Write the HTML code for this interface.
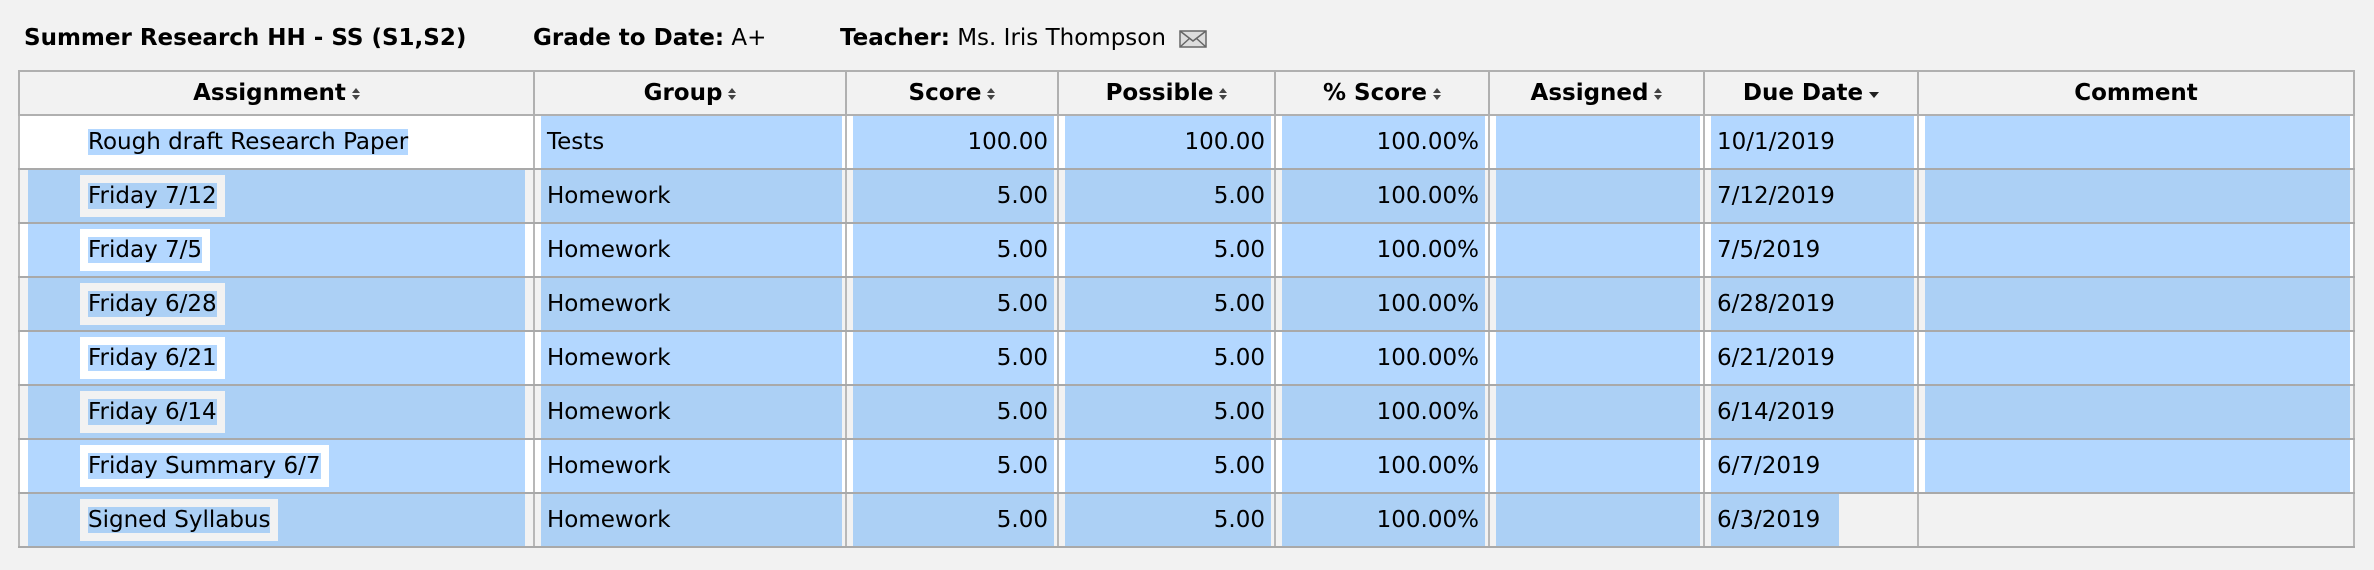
<!DOCTYPE html>
<html><head><meta charset="utf-8"><style>
body{margin:0;width:2374px;height:570px;background:#f2f2f2;font-family:"DejaVu Sans","Liberation Sans",sans-serif;color:#000;overflow:hidden;position:relative}
.t{position:absolute;top:25px;font-size:23px;white-space:nowrap}
b{font-weight:bold}
table{position:absolute;left:18px;top:70px;border-collapse:collapse;table-layout:fixed;width:2335px;font-size:23px}
td,th{border:2px solid #a9a9a9;padding:0;height:52px;white-space:nowrap;overflow:hidden}
th{height:42px;font-weight:bold;font-size:23px;background:#f2f2f2;text-align:center;border-color:#b0b0b0}
tr.w td{background:#fff}
tr.g td{background:#f2f2f2}
tr td{border-left-color:#b8b8b8;border-right-color:#b8b8b8}
.h{height:52px;margin:0 3px 0 6px;line-height:52px;padding:0 6px}
tr.w .h{background:#b3d7ff}
tr.g .h{background:#acd0f5}
.r{text-align:right}
.a{padding-left:68px;line-height:52px;height:52px}
tr.w .a span{background:#b3d7ff}
tr.g .a{background:#acd0f5;margin:0 8px 0 8px;padding-left:60px}
tr.g .a span{background:#acd0f5;box-shadow:0 0 0 8px #f2f2f2}
tr.w .a2{background:#b3d7ff;margin:0 8px;padding-left:60px}
tr.w .a2 span{box-shadow:0 0 0 8px #fff}
.none{background:none!important}
svg{vertical-align:middle;margin-left:6px}
</style></head><body>
<div class="t" style="left:24px"><b>Summer Research HH - SS (S1,S2)</b></div>
<div class="t" style="left:533px"><b>Grade to Date:</b> A+</div>
<div class="t" style="left:840px"><b>Teacher:</b> Ms. Iris Thompson <svg width="28" height="20" viewBox="0 0 28 20"><rect x="1" y="2" width="26" height="16" fill="#ddd" stroke="#666" stroke-width="1.5"/><path d="M1 2 L14 12 L27 2 M1 18 L11 9 M27 18 L17 9" stroke="#666" stroke-width="1.5" fill="none"/></svg></div>
<table>
<colgroup><col style="width:515px"><col style="width:312px"><col style="width:212px"><col style="width:217px"><col style="width:214px"><col style="width:215px"><col style="width:214px"><col style="width:436px"></colgroup>
<tr>
<th>Assignment<svg width="8" height="14"><path d="M0 6L4 1L8 6Z M0 8L4 13L8 8Z" fill="#444"/></svg></th>
<th>Group<svg width="8" height="14"><path d="M0 6L4 1L8 6Z M0 8L4 13L8 8Z" fill="#444"/></svg></th>
<th>Score<svg width="8" height="14"><path d="M0 6L4 1L8 6Z M0 8L4 13L8 8Z" fill="#444"/></svg></th>
<th>Possible<svg width="8" height="14"><path d="M0 6L4 1L8 6Z M0 8L4 13L8 8Z" fill="#444"/></svg></th>
<th>% Score<svg width="8" height="14"><path d="M0 6L4 1L8 6Z M0 8L4 13L8 8Z" fill="#444"/></svg></th>
<th>Assigned<svg width="8" height="14"><path d="M0 6L4 1L8 6Z M0 8L4 13L8 8Z" fill="#444"/></svg></th>
<th>Due Date<svg width="10" height="14"><path d="M0 5L5 11L10 5Z" fill="#222"/></svg></th>
<th>Comment</th>
</tr>
<tr class="w"><td><div class="a"><span>Rough draft Research Paper</span></div></td><td><div class="h">Tests</div></td><td><div class="h r">100.00</div></td><td><div class="h r">100.00</div></td><td><div class="h r">100.00%</div></td><td><div class="h"></div></td><td><div class="h">10/1/2019</div></td><td><div class="h"></div></td></tr>
<tr class="g"><td><div class="a"><span>Friday 7/12</span></div></td><td><div class="h">Homework</div></td><td><div class="h r">5.00</div></td><td><div class="h r">5.00</div></td><td><div class="h r">100.00%</div></td><td><div class="h"></div></td><td><div class="h">7/12/2019</div></td><td><div class="h"></div></td></tr>
<tr class="w"><td><div class="a a2"><span>Friday 7/5</span></div></td><td><div class="h">Homework</div></td><td><div class="h r">5.00</div></td><td><div class="h r">5.00</div></td><td><div class="h r">100.00%</div></td><td><div class="h"></div></td><td><div class="h">7/5/2019</div></td><td><div class="h"></div></td></tr>
<tr class="g"><td><div class="a"><span>Friday 6/28</span></div></td><td><div class="h">Homework</div></td><td><div class="h r">5.00</div></td><td><div class="h r">5.00</div></td><td><div class="h r">100.00%</div></td><td><div class="h"></div></td><td><div class="h">6/28/2019</div></td><td><div class="h"></div></td></tr>
<tr class="w"><td><div class="a a2"><span>Friday 6/21</span></div></td><td><div class="h">Homework</div></td><td><div class="h r">5.00</div></td><td><div class="h r">5.00</div></td><td><div class="h r">100.00%</div></td><td><div class="h"></div></td><td><div class="h">6/21/2019</div></td><td><div class="h"></div></td></tr>
<tr class="g"><td><div class="a"><span>Friday 6/14</span></div></td><td><div class="h">Homework</div></td><td><div class="h r">5.00</div></td><td><div class="h r">5.00</div></td><td><div class="h r">100.00%</div></td><td><div class="h"></div></td><td><div class="h">6/14/2019</div></td><td><div class="h"></div></td></tr>
<tr class="w"><td><div class="a a2"><span>Friday Summary 6/7</span></div></td><td><div class="h">Homework</div></td><td><div class="h r">5.00</div></td><td><div class="h r">5.00</div></td><td><div class="h r">100.00%</div></td><td><div class="h"></div></td><td><div class="h">6/7/2019</div></td><td><div class="h"></div></td></tr>
<tr class="g"><td><div class="a"><span>Signed Syllabus</span></div></td><td><div class="h">Homework</div></td><td><div class="h r">5.00</div></td><td><div class="h r">5.00</div></td><td><div class="h r">100.00%</div></td><td><div class="h"></div></td><td><div class="h" style="width:116px">6/3/2019</div></td><td><div class="h none"></div></td></tr>
</table>
</body></html>
